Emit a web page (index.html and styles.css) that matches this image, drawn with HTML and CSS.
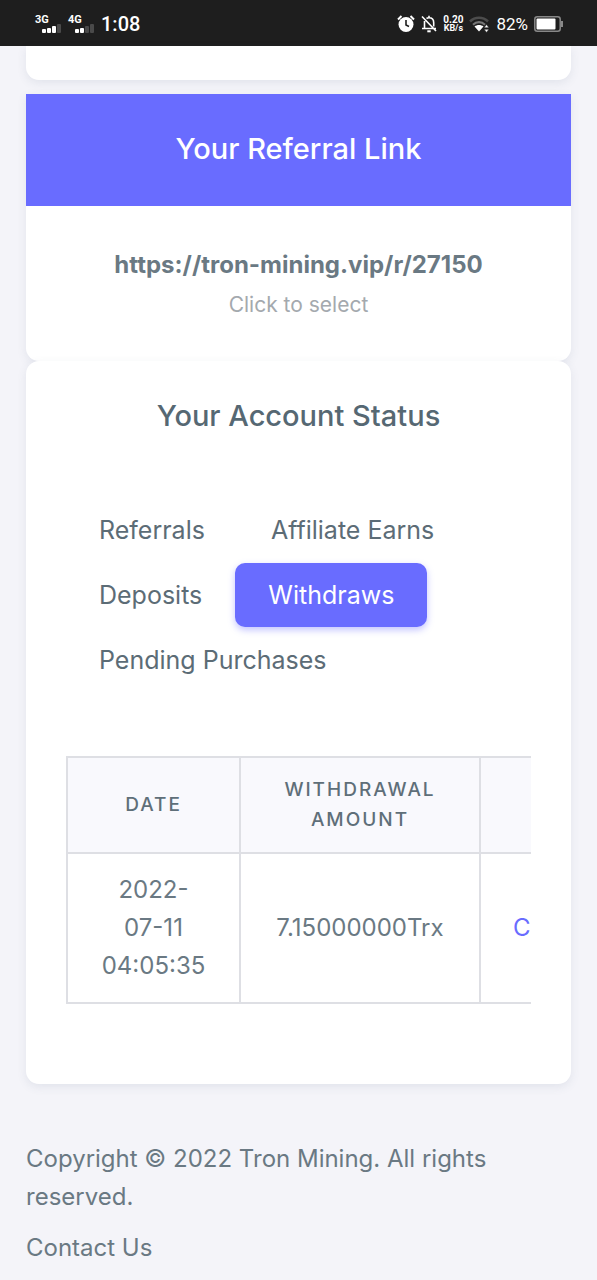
FILE: index.html
```html
<!DOCTYPE html>
<html lang="en">
<head>
<meta charset="utf-8">
<meta name="viewport" content="width=device-width, initial-scale=1">
<title>Tron Mining</title>
<link rel="stylesheet" href="styles.css">
</head>
<body>
<header class="status">
  <div class="status-left">
    <div class="signal"><span class="net">3G</span>
      <svg class="bars" width="19" height="9" viewBox="0 0 19 9" fill="#fff"><rect x="0" y="5" width="4" height="4" rx="1"/><rect x="5" y="4" width="4" height="5" rx="1"/><rect x="10" y="2" width="4" height="7" rx="1"/><rect x="15" width="4" height="9" rx="1" fill="#4a4a4a"/></svg>
    </div>
    <div class="signal"><span class="net">4G</span>
      <svg class="bars" width="19" height="9" viewBox="0 0 19 9" fill="#fff"><rect x="0" y="5" width="4" height="4" rx="1"/><rect x="5" y="4" width="4" height="5" rx="1"/><rect x="10" y="2" width="4" height="7" rx="1" fill="#4a4a4a"/><rect x="15" width="4" height="9" rx="1" fill="#4a4a4a"/></svg>
    </div>
    <time class="clock">1:08</time>
  </div>
  <div class="status-right">
    <svg width="18" height="18" viewBox="0 0 18 18" fill="none"><circle cx="9" cy="9.5" r="7.5" fill="#fff"/><path d="M1 4.500 4.500 1M17 4.500 13.500 1" stroke="#fff" stroke-width="2"/><path d="M9 5v5l3 1.500" stroke="#1e1e1e" stroke-width="1.600"/></svg>
    <svg width="16" height="18" viewBox="0 0 16 18" fill="none" stroke="#fff" stroke-width="1.600"><path d="M3.500 6v7.500M1 13.500h14M5.500 3.500C6.200 3 7 2.800 8 2.800c3 0 4.700 2 4.700 5v3.700M8 .8v2M1 1.500 15 16"/><path d="M6.300 16.300h3.400" stroke-width="2"/></svg>
    <div class="speed"><span>0.20</span><span>KB/s</span></div>
    <svg width="21" height="17" viewBox="0 0 21 17" fill="none"><path d="M1 5.500C6 .5 14 .5 19 5.500" stroke="#4c4c4c" stroke-width="2.500"/><path d="M4 8.700c3.500-3.400 8.500-3.400 12 0" stroke="#777" stroke-width="2.200"/><path d="M5.500 10.500c2.700-2 6.300-2 9 0L10 15.500z" fill="#fff"/><path d="M15 11.800 17.500 8.500l2.500 3.300zM15 13.200l2.500 3.300 2.500-3.300z" fill="#fff" stroke="#1e1e1e" stroke-width=".6"/></svg>
    <span class="percent">82%</span>
    <svg width="30" height="16" viewBox="0 0 30 16" fill="none"><rect x=".8" y=".8" width="25.400" height="14.400" rx="2.500" stroke="#888" stroke-width="1.500"/><rect x="2.500" y="2.500" width="19" height="11" rx="1" fill="#fff"/><path d="M28 5v6" stroke="#888" stroke-width="2"/></svg>
  </div>
</header>
<main class="content">
  <section class="card card-tail"></section>
  <section class="card referral">
    <h2 class="title referral-title">Your Referral Link</h2>
    <div class="referral-body">
      <strong class="link">https://tron-mining.vip/r/27150</strong>
      <span class="hint">Click to select</span>
    </div>
  </section>
  <section class="card account">
    <h2 class="title">Your Account Status</h2>
    <div class="tabs" role="tablist">
      <button class="tab" role="tab">Referrals</button>
      <button class="tab" role="tab">Affiliate Earns</button>
      <button class="tab" role="tab">Deposits</button>
      <button class="tab active" role="tab" aria-selected="true">Withdraws</button>
      <button class="tab" role="tab">Pending Purchases</button>
    </div>
    <div class="table-wrap">
      <table class="table">
        <colgroup><col class="col-date"><col class="col-amount"><col class="col-check"></colgroup>
        <thead><tr><th>Date</th><th>Withdrawal Amount</th><th></th></tr></thead>
        <tbody><tr><td>2022-07-11 04:05:35</td><td>7.15000000Trx</td><td class="check"><a href="#">C</a></td></tr></tbody>
      </table>
    </div>
  </section>
</main>
<footer class="footer">
  <p>Copyright © 2022 Tron Mining. All rights reserved.</p>
  <a href="#">Contact Us</a>
</footer>
</body>
</html>
```
FILE: styles.css
```css
* { box-sizing: border-box; }
body {
  margin: 0;
  background: #f4f4f9;
  color: #6a7983;
  font: 24px/38px Inter, "Liberation Sans", sans-serif;
}
.status {
  display: flex;
  align-items: center;
  justify-content: space-between;
  height: 46px;
  padding: 2px 33px 0 35px;
  background: #1e1e1e;
  color: #fff;
  font-family: Roboto, sans-serif;
}
.status-left, .status-right { display: flex; align-items: center; }
.status-left { gap: 7px; }
.status-right { gap: 6px; }
.signal { display: flex; flex-direction: column; width: 26px; }
.net { font-size: 11px; font-weight: 700; line-height: 9px; }
.bars { align-self: flex-end; }
.clock { font-size: 20px; font-weight: 500; line-height: 24px; }
.speed { display: flex; flex-direction: column; align-items: center; font-size: 9px; font-weight: 700; line-height: 9px; }
.speed span:first-child { font-size: 10px; }
.percent { font-size: 17px; line-height: 24px; }
.content { padding: 0 26px; }
.card { background: #fff; border-radius: 13px; box-shadow: 0 3px 10px rgba(67, 89, 113, .1); }
.card-tail { height: 34px; margin-bottom: 14px; border-radius: 0 0 13px 13px; }
.title { margin: 0; color: #566873; font-size: 29px; font-weight: 500; line-height: 32px; text-align: center; }
.referral { border-radius: 0 0 13px 13px; }
.referral-title { padding: 39px 40px 41px; background: #696cff; color: #fff; }
.referral-body { display: flex; flex-direction: column; align-items: center; padding: 40px 20px 37px; }
.link { font-weight: 700; }
.hint { margin-top: 2px; color: #a4a9ae; font-size: 21px; }
.account { padding: 39px 40px 80px; }
.tabs { display: flex; flex-wrap: wrap; row-gap: 1px; margin: 66px 0 64px; }
.tab {
  border: 0;
  border-radius: 10px;
  padding: 13px 33px;
  background: transparent;
  color: #5c6c76;
  font: inherit;
  font-size: 25px;
}
.tab.active { background: #696cff; color: #fff; box-shadow: 0 3px 7px rgba(105, 108, 255, .4); }
.table-wrap { overflow: hidden; }
.table { width: 600px; table-layout: fixed; border-collapse: collapse; text-align: center; }
.col-date { width: 173px; }
.col-amount { width: 240px; }
.table th, .table td { border: 2px solid #dedfe4; }
.table th {
  padding: 17px 32px;
  background: #f9f9fd;
  color: #5f6f79;
  font-size: 19px;
  font-weight: 500;
  line-height: 30px;
  letter-spacing: 2px;
  text-transform: uppercase;
}
.table td { padding: 17px 32px; }
.table .check { text-align: left; }
.check a { color: #696cff; text-decoration: none; }
.footer { padding: 56px 26px 12px; }
.footer p { margin: 0 0 13px; }
.footer a { color: inherit; text-decoration: none; }
```
